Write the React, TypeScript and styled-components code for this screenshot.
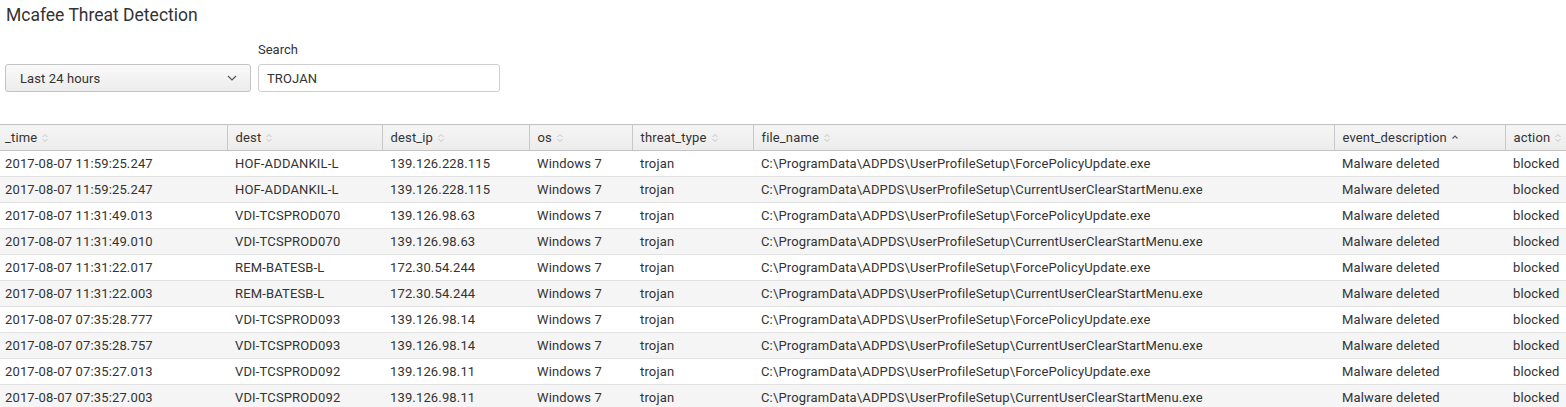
import React from 'react';
import styled, { createGlobalStyle } from 'styled-components';

const GlobalStyle = createGlobalStyle`
	html, body {
		margin: 0;
		padding: 0;
		background: #fff;
		overflow: hidden;
	}
	body {
		font-family: Roboto, 'Liberation Sans', Arial, sans-serif;
		color: #333;
	}
`;

interface Row {
	time: string;
	dest: string;
	ip: string;
	file: string;
}

const columns = [
	{ key: 'time', label: '_time', width: 227 },
	{ key: 'dest', label: 'dest', width: 155 },
	{ key: 'ip', label: 'dest_ip', width: 147 },
	{ key: 'os', label: 'os', width: 103 },
	{ key: 'threat', label: 'threat_type', width: 121 },
	{ key: 'file', label: 'file_name', width: 581 },
	{ key: 'desc', label: 'event_description', width: 171, sorted: true },
	{ key: 'action', label: 'action', width: 80 },
];

const FORCE = 'C:\\ProgramData\\ADPDS\\UserProfileSetup\\ForcePolicyUpdate.exe';
const CLEAR = 'C:\\ProgramData\\ADPDS\\UserProfileSetup\\CurrentUserClearStartMenu.exe';

const rows: Row[] = [
	{ time: '2017-08-07 11:59:25.247', dest: 'HOF-ADDANKIL-L', ip: '139.126.228.115', file: FORCE },
	{ time: '2017-08-07 11:59:25.247', dest: 'HOF-ADDANKIL-L', ip: '139.126.228.115', file: CLEAR },
	{ time: '2017-08-07 11:31:49.013', dest: 'VDI-TCSPROD070', ip: '139.126.98.63', file: FORCE },
	{ time: '2017-08-07 11:31:49.010', dest: 'VDI-TCSPROD070', ip: '139.126.98.63', file: CLEAR },
	{ time: '2017-08-07 11:31:22.017', dest: 'REM-BATESB-L', ip: '172.30.54.244', file: FORCE },
	{ time: '2017-08-07 11:31:22.003', dest: 'REM-BATESB-L', ip: '172.30.54.244', file: CLEAR },
	{ time: '2017-08-07 07:35:28.777', dest: 'VDI-TCSPROD093', ip: '139.126.98.14', file: FORCE },
	{ time: '2017-08-07 07:35:28.757', dest: 'VDI-TCSPROD093', ip: '139.126.98.14', file: CLEAR },
	{ time: '2017-08-07 07:35:27.013', dest: 'VDI-TCSPROD092', ip: '139.126.98.11', file: FORCE },
	{ time: '2017-08-07 07:35:27.003', dest: 'VDI-TCSPROD092', ip: '139.126.98.11', file: CLEAR },
];

const SortIcon = ({ sorted }: { sorted?: boolean }) =>
	sorted ? (
		<svg width="8" height="8" viewBox="0 0 8 8">
			<path d="M1.5 4.5 L4 2 L6.5 4.5" fill="none" stroke="#555" strokeWidth="1.1" />
		</svg>
	) : (
		<svg width="8" height="10" viewBox="0 0 8 10">
			<path d="M1.5 4 L4 1.5 L6.5 4 M1.5 6 L4 8.5 L6.5 6" fill="none" stroke="#c6c6c6" strokeWidth="1" />
		</svg>
	);

const App = () => {
	return (
		<Page>
			<GlobalStyle />
			<Title>Mcafee Threat Detection</Title>
			<Fieldset>
				<Field>
					<Dropdown>
						<span>Last 24 hours</span>
						<svg width="10" height="6" viewBox="0 0 10 6">
							<path d="M1 1 L5 5 L9 1" fill="none" stroke="#555" strokeWidth="1.2" />
						</svg>
					</Dropdown>
				</Field>
				<Field>
					<Label>Search</Label>
					<TextInput>TROJAN</TextInput>
				</Field>
			</Fieldset>
			<TableWrap>
				<Table>
					<colgroup>
						{columns.map((c) => (
							<col key={c.key} style={{ width: c.width }} />
						))}
					</colgroup>
					<thead>
						<tr>
							{columns.map((c) => (
								<Th key={c.key} $first={c.key === 'time'}>
									<HeadLabel>
										{c.label}
										<SortIcon sorted={c.sorted} />
									</HeadLabel>
								</Th>
							))}
						</tr>
					</thead>
					<tbody>
						{rows.map((r, i) => (
							<Tr key={i} $odd={i % 2 === 1}>
								<Td $first>{r.time}</Td>
								<Td>{r.dest}</Td>
								<Td>{r.ip}</Td>
								<Td>Windows 7</Td>
								<Td>trojan</Td>
								<Td>{r.file}</Td>
								<Td>Malware deleted</Td>
								<Td>blocked</Td>
							</Tr>
						))}
					</tbody>
				</Table>
			</TableWrap>
		</Page>
	);
};

export default App;

const Page = styled.div`
	width: 1566px;
	height: 407px;
	overflow: hidden;
`;

const Title = styled.h2`
	margin: 0;
	padding: 4px 0 0 6px;
	height: 24px;
	font-size: 17.5px;
	font-weight: 400;
	line-height: 22px;
	color: #333;
`;

const Fieldset = styled.div`
	display: flex;
	align-items: flex-end;
	gap: 7px;
	padding: 0 0 0 5px;
	height: 64px;
	box-sizing: border-box;
`;

const Field = styled.div`
	display: flex;
	flex-direction: column;
`;

const Label = styled.div`
	font-size: 13px;
	line-height: 15px;
	color: #333;
	margin-bottom: 7px;
`;

const Dropdown = styled.div`
	width: 246px;
	height: 28px;
	box-sizing: border-box;
	display: flex;
	align-items: center;
	justify-content: space-between;
	padding: 0 13px 0 14px;
	border: 1px solid #c3c3c3;
	border-radius: 3px;
	background: linear-gradient(#f9f9f9, #ececec);
	font-size: 13px;
	letter-spacing: 0.1px;
	color: #333;
`;

const TextInput = styled.div`
	width: 242px;
	height: 28px;
	box-sizing: border-box;
	display: flex;
	align-items: center;
	padding: 0 8px;
	border: 1px solid #cfcfcf;
	border-radius: 3px;
	background: #fff;
	font-size: 13px;
	letter-spacing: 0.1px;
	color: #333;
`;

const TableWrap = styled.div`
	margin-top: 32px;
	width: 1566px;
	overflow: hidden;
`;

const Table = styled.table`
	border-collapse: collapse;
	table-layout: fixed;
	width: 1585px;
	font-size: 13px;
	letter-spacing: 0.15px;
	color: #333;
`;

const Th = styled.th<{ $first?: boolean }>`
	height: 26px;
	box-sizing: border-box;
	padding: 0 0 0 ${({ $first }) => ($first ? '5px' : '8px')};
	text-align: left;
	font-weight: 400;
	background: linear-gradient(#f5f5f5, #ececec);
	border-top: 1px solid #c3c3c3;
	border-bottom: 1px solid #c3c3c3;
	border-left: ${({ $first }) => ($first ? 'none' : '1px solid #c8c8c8')};
	white-space: nowrap;
`;

const HeadLabel = styled.span`
	display: inline-flex;
	align-items: center;
	gap: 4px;
`;

const Tr = styled.tr<{ $odd?: boolean }>`
	background: ${({ $odd }) => ($odd ? '#f5f5f5' : '#fff')};
	border-bottom: 1px solid #e1e1e1;
`;

const Td = styled.td<{ $first?: boolean }>`
	height: 26px;
	box-sizing: border-box;
	padding: 0 0 0 ${({ $first }) => ($first ? '5px' : '8px')};
	white-space: nowrap;
	overflow: hidden;
`;
